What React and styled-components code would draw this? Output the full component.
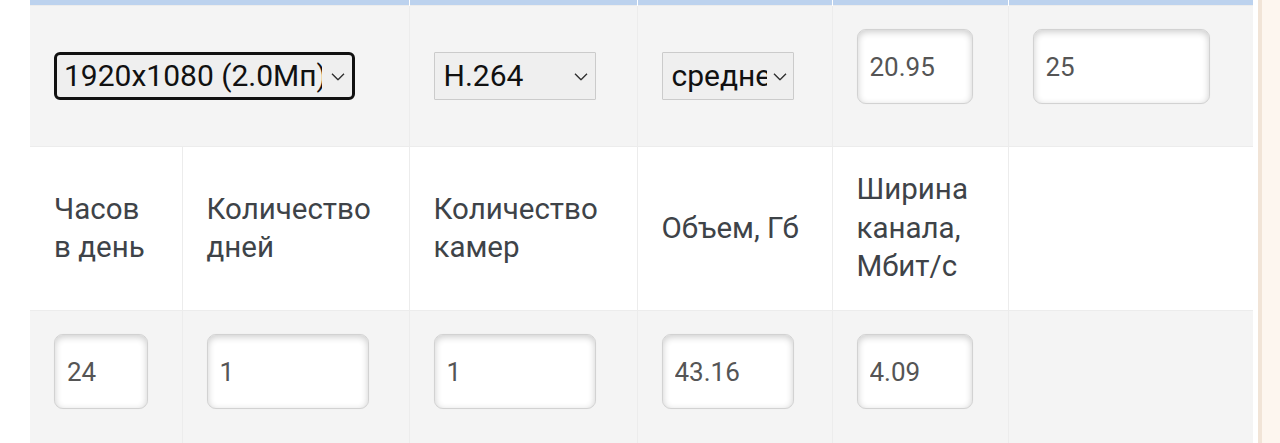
import React from "react";
import styled, { createGlobalStyle } from "styled-components";

const Global = createGlobalStyle`
  html, body { margin: 0; padding: 0; background: #ffffff; overflow: hidden; }
  * { box-sizing: border-box; }
`;

const Page = styled.div`
  display: flex;
  height: 443px;
  overflow: hidden;
  font-family: Roboto, "Noto Sans", sans-serif;
`;

const Main = styled.div`
  width: 1258px;
  flex: none;
  padding-left: 30px;
  background: #ffffff;
`;

const Side = styled.div`
  flex: 1;
  background: #fdf6ef;
  border-left: 4px solid #f1e4d7;
`;

const Table = styled.table`
  width: 1223px;
  table-layout: fixed;
  border-collapse: collapse;
`;

const StripRow = styled.tr`
  height: 5px;
`;

const StripCell = styled.td`
  padding: 0;
  height: 5px;
  background: #bcd2ee;
  border-left: 1px solid #ffffff;
  &:first-child { border-left: none; }
`;

const Row = styled.tr`
  height: ${(p) => p.$h}px;
  background: ${(p) => (p.$tone === "white" ? "#ffffff" : "#f4f4f4")};
  border-top: 1px solid #ececec;
`;

const Cell = styled.td`
  padding: 0 10px 0 24px;
  vertical-align: middle;
  border-left: 1px solid #ececec;
  &:first-child { border-left: none; }
`;

const HeadText = styled.div`
  font-size: 29.5px;
  line-height: 38.5px;
  color: #3e4348;
  font-weight: 400;
`;

const SelectWrap = styled.div`
  position: relative;
  width: ${(p) => p.$w}px;
  height: 48px;
`;

const Select = styled.select`
  appearance: none;
  -webkit-appearance: none;
  width: 100%;
  height: 100%;
  margin: 0;
  font-family: Roboto, "Noto Sans", sans-serif;
  font-size: 30px;
  color: #111111;
  background: #efefef;
  border: ${(p) => (p.$focused ? "3px solid #111111" : "1px solid #cbcbcb")};
  border-radius: ${(p) => (p.$focused ? "6px" : "1px")};
  padding: 0 ${(p) => p.$pr}px 0 ${(p) => (p.$focused ? 7 : 9)}px;
  outline: none;
  overflow: hidden;
  white-space: nowrap;
`;

const Chevron = styled.svg`
  position: absolute;
  right: ${(p) => p.$right}px;
  top: 50%;
  transform: translateY(-40%);
  width: 14px;
  height: 8px;
  pointer-events: none;
`;

const Input = styled.input`
  display: block;
  width: ${(p) => p.$w}px;
  height: 75px;
  margin: 0 0 18px 0;
  padding: 0 0 0 12px;
  font-family: Roboto, "Noto Sans", sans-serif;
  font-size: 26px;
  color: #555555;
  background: #ffffff;
  border: 1px solid #d2d2d2;
  border-radius: 9px;
  box-shadow: inset 0 2px 7px rgba(0, 0, 0, 0.2), 0 0 1px rgba(0, 0, 0, 0.08);
  outline: none;
`;

function Dropdown({ width, value, focused, pr, chevronRight }) {
  return (
    <SelectWrap $w={width}>
      <Select $focused={focused} $pr={pr} defaultValue={value}>
        <option value={value}>{value}</option>
      </Select>
      <Chevron $right={chevronRight} viewBox="0 0 14 8">
        <path d="M1 1 L7 7 L13 1" fill="none" stroke="#333" strokeWidth="1.4" />
      </Chevron>
    </SelectWrap>
  );
}

const cols = [152, 227, 228, 195, 176, 245];

export default function App() {
  return (
    <>
      <Global />
      <Page>
        <Main>
          <Table>
            <colgroup>
              {cols.map((w, i) => (
                <col key={i} style={{ width: w }} />
              ))}
            </colgroup>
            <tbody>
              <StripRow>
                <StripCell colSpan={2} />
                <StripCell />
                <StripCell />
                <StripCell />
                <StripCell />
              </StripRow>
              <Row $h={141}>
                <Cell colSpan={2}>
                  <Dropdown width={301} value="1920x1080 (2.0Мп)" focused pr={30} chevronRight={10} />
                </Cell>
                <Cell>
                  <Dropdown width={162} value="H.264" pr={28} chevronRight={8} />
                </Cell>
                <Cell>
                  <Dropdown width={132} value="среднее" pr={26} chevronRight={7} />
                </Cell>
                <Cell>
                  <Input $w={116} defaultValue="20.95" />
                </Cell>
                <Cell>
                  <Input $w={177} defaultValue="25" />
                </Cell>
              </Row>
              <Row $h={164} $tone="white">
                <Cell>
                  <HeadText>Часов<br />в день</HeadText>
                </Cell>
                <Cell>
                  <HeadText>Количество<br />дней</HeadText>
                </Cell>
                <Cell>
                  <HeadText>Количество<br />камер</HeadText>
                </Cell>
                <Cell>
                  <HeadText>Объем, Гб</HeadText>
                </Cell>
                <Cell>
                  <HeadText>Ширина<br />канала,<br />Мбит/с</HeadText>
                </Cell>
                <Cell />
              </Row>
              <Row $h={141}>
                <Cell>
                  <Input $w={94} defaultValue="24" />
                </Cell>
                <Cell>
                  <Input $w={162} defaultValue="1" />
                </Cell>
                <Cell>
                  <Input $w={162} defaultValue="1" />
                </Cell>
                <Cell>
                  <Input $w={132} defaultValue="43.16" />
                </Cell>
                <Cell>
                  <Input $w={116} defaultValue="4.09" />
                </Cell>
                <Cell />
              </Row>
            </tbody>
          </Table>
        </Main>
        <Side />
      </Page>
    </>
  );
}
